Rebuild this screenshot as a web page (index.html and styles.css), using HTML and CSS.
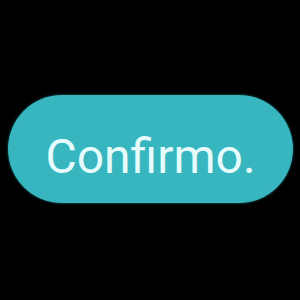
FILE: index.html
```html
<!DOCTYPE html>
<html>
<head>
<meta charset="utf-8">
<link rel="stylesheet" href="styles.css">
</head>
<body>
<div class="stage">
  <button class="pill">Confirmo.</button>
</div>
</body>
</html>
```

FILE: styles.css
```css
html, body {
  margin: 0;
  padding: 0;
  background: #000;
}
.stage {
  width: 300px;
  height: 300px;
  display: flex;
  align-items: flex-start;
  justify-content: flex-start;
  padding: 95px 0 0 8px;
  box-sizing: border-box;
}
.pill {
  width: 285px;
  height: 108px;
  border: none;
  border-radius: 54px;
  background: #38b6bf;
  box-shadow: 0 0 2px 1px #0b3236;
  color: #e6fbfb;
  font-family: Roboto, "Noto Sans", sans-serif;
  font-size: 48px;
  font-weight: 400;
  padding: 14px 0 0 0;
  display: flex;
  align-items: center;
  justify-content: center;
}
```
